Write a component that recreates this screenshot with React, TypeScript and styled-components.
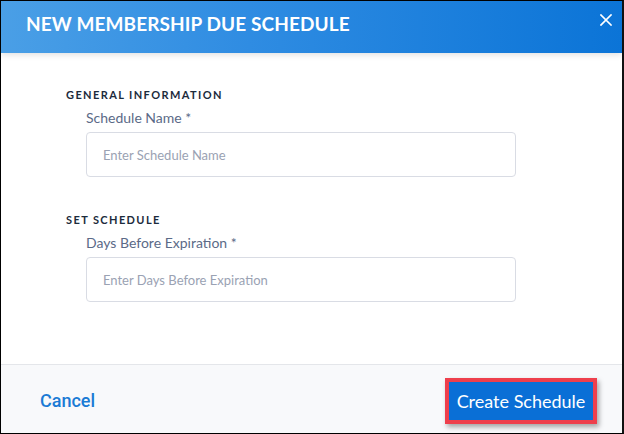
import React from 'react'
import styled, { createGlobalStyle } from 'styled-components'

const GlobalStyle = createGlobalStyle`
  html, body {
    margin: 0;
    padding: 0;
    background: #ffffff;
  }
  * {
    box-sizing: border-box;
  }
`

const Modal = styled.div`
  width: 624px;
  height: 434px;
  display: flex;
  flex-direction: column;
  border-top: 1px solid #000;
  border-left: 1px solid #000;
  border-right: 2px solid #111;
  border-bottom: 1px solid #000;
  background: #fff;
  font-family: Lato, 'Open Sans', sans-serif;
  overflow: hidden;
`

const Header = styled.header`
  position: relative;
  z-index: 1;
  height: 52px;
  flex: none;
  display: flex;
  justify-content: space-between;
  align-items: flex-start;
  padding: 12px 10px 0 25px;
  background: linear-gradient(90deg, #4a9fe6 0%, #2f8ce2 40%, #0b74d7 100%);
  box-shadow: 0 2px 6px rgba(0, 0, 0, 0.12);
`

const Title = styled.h1`
  margin: 0;
  color: #fff;
  font-size: 19px;
  line-height: 22px;
  font-weight: 700;
  letter-spacing: 0.1px;
`

const CloseButton = styled.button`
  border: 0;
  background: none;
  padding: 0;
  margin-top: 1px;
  width: 12px;
  height: 12px;
  cursor: pointer;
  display: flex;
`

const Body = styled.main`
  flex: 1;
  padding: 35px 0 0 65px;
  display: flex;
  flex-direction: column;
  gap: 36px;
`

const Section = styled.section`
  display: flex;
  flex-direction: column;
`

const SectionTitle = styled.h2`
  margin: 0 0 7px;
  font-size: 11px;
  line-height: 14px;
  font-weight: 700;
  letter-spacing: 1.4px;
  color: #1c2b3c;
  text-transform: uppercase;
`

const Field = styled.div`
  display: flex;
  flex-direction: column;
  padding-left: 20px;
`

const Label = styled.label`
  font-size: 14px;
  line-height: 18px;
  color: #5b6a87;
  margin-bottom: 5px;
`

const Input = styled.input`
  width: 430px;
  height: 45px;
  border: 1px solid #d9dce4;
  border-radius: 4px;
  padding: 0 16px;
  font-family: Lato, 'Open Sans', sans-serif;
  font-size: 13px;
  color: #333;
  outline: none;

  &::placeholder {
    color: #9aa2b3;
  }
`

const Footer = styled.footer`
  height: 69px;
  flex: none;
  border-top: 1px solid #e4e6ea;
  background: #f8f9fb;
  display: flex;
  align-items: center;
  justify-content: space-between;
  padding: 3px 25px 0 39px;
`

const CancelLink = styled.button`
  border: 0;
  background: none;
  padding: 0;
  font-family: Roboto, 'Liberation Sans', sans-serif;
  font-weight: 500;
  font-size: 18px;
  color: #1b7bd5;
  cursor: pointer;
`

const PrimaryButton = styled.button`
  width: 152px;
  height: 46px;
  border: 4px solid #ee3f4c;
  background: #0a6fd6;
  color: #fff;
  font-family: Lato, 'Open Sans', sans-serif;
  font-size: 18px;
  padding: 0 6px;
  box-shadow: 2px 3px 5px rgba(0, 0, 0, 0.35);
  cursor: pointer;
`

export default function App() {
  return (
    <>
      <GlobalStyle />
      <Modal>
        <Header>
          <Title>NEW MEMBERSHIP DUE SCHEDULE</Title>
          <CloseButton aria-label="Close">
            <svg width="12" height="12" viewBox="0 0 12 12">
              <path d="M1 1 L11 11 M11 1 L1 11" stroke="#fff" strokeWidth="1.7" strokeLinecap="square" />
            </svg>
          </CloseButton>
        </Header>

        <Body>
          <Section>
            <SectionTitle>General Information</SectionTitle>
            <Field>
              <Label>Schedule Name *</Label>
              <Input placeholder="Enter Schedule Name" />
            </Field>
          </Section>

          <Section>
            <SectionTitle>Set Schedule</SectionTitle>
            <Field>
              <Label>Days Before Expiration *</Label>
              <Input placeholder="Enter Days Before Expiration" />
            </Field>
          </Section>
        </Body>

        <Footer>
          <CancelLink>Cancel</CancelLink>
          <PrimaryButton>Create Schedule</PrimaryButton>
        </Footer>
      </Modal>
    </>
  )
}
